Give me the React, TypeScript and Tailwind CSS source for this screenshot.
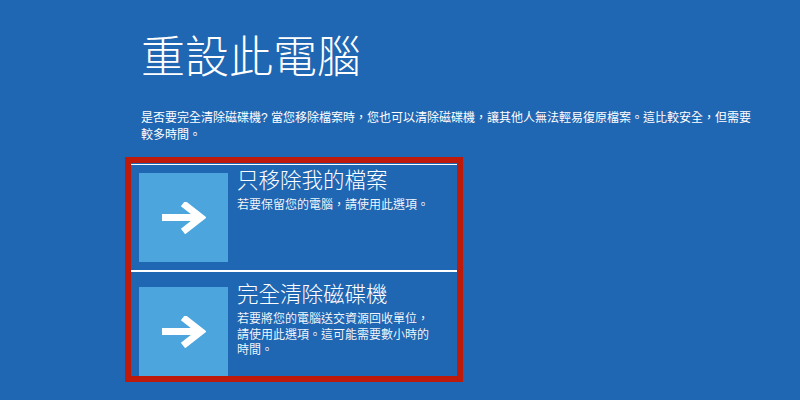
const cjk = { fontFamily: '"Liberation Sans", "Noto Sans CJK TC", sans-serif' };

const ArrowIcon = () => (
  <svg width="44" height="32" viewBox="0 0 44 32" fill="none">
    <path d="M0 15.5H39" stroke="white" strokeWidth="7" />
    <path d="M21 1.5L39 15.5L21 29.5" stroke="white" strokeWidth="7" strokeLinejoin="miter" />
  </svg>
);

type OptionProp = {
  title: string;
  lines: string;
  first?: boolean;
};

const ResetOption = ({ title, lines, first }: OptionProp) => (
  <div
    className={
      first
        ? 'mt-[1px] flex border-t border-white px-2 pt-2 pb-2'
        : 'flex border-t-2 border-white px-2 pt-[15px]'
    }
  >
    <div className="flex h-[89px] w-[89px] shrink-0 items-center justify-center bg-[#4ca6dd]">
      <ArrowIcon />
    </div>
    <div className="ml-[9px] -mt-[5px] flex flex-col">
      <div className="text-[21.5px] font-light leading-[26px] text-white">{title}</div>
      <div className="mt-[4px] w-[200px] text-[12px] leading-[15.5px] text-white/95">{lines}</div>
    </div>
  </div>
);

const App = () => {
  return (
    <div lang="zh-Hant-TW" style={cjk} className="h-[400px] w-[800px] overflow-hidden bg-[#1f66b3] text-white">
      <div className="pl-[141px] pt-[34px]">
        <h1 className="text-[44px] font-light leading-[48px]">重設此電腦</h1>
        <p className="mt-[28px] w-[616px] text-[12px] leading-[17px]">
          是否要完全清除磁碟機? 當您移除檔案時，您也可以清除磁碟機，讓其他人無法輕易復原檔案。這比較安全，但需要較多時間。
        </p>
      </div>
      <div className="ml-[125px] mt-[13px] h-[225px] w-[338px] overflow-hidden border-[6px] border-[#be1a0c]">
        <ResetOption first title="只移除我的檔案" lines="若要保留您的電腦，請使用此選項。" />
        <ResetOption
          title="完全清除磁碟機"
          lines="若要將您的電腦送交資源回收單位，請使用此選項。這可能需要數小時的時間。"
        />
      </div>
    </div>
  );
};

export default App;
